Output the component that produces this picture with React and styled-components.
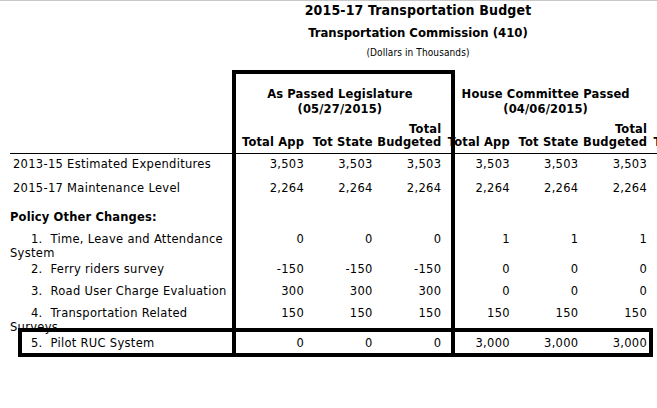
import React from 'react';
import styled, { createGlobalStyle } from 'styled-components';

const COLS = '227px repeat(9, 68.6px)';

const Global = createGlobalStyle`
  html, body { margin: 0; padding: 0; overflow: hidden; background: #fff; }
  body { font-family: "DejaVu Sans", Verdana, sans-serif; color: #000; }
`;

const Page = styled.div`
  width: 657px;
  height: 408px;
  overflow: hidden;
  border-top: 1px solid #c8c8c8;
  box-sizing: border-box;
`;

const Content = styled.div`
  padding-left: 10px;
  width: 844px;
`;

const TitleBlock = styled.header`
  width: 816px;
  text-align: center;
  font-family: "DejaVu Sans Condensed", "DejaVu Sans", Tahoma, sans-serif;
  font-stretch: condensed;
`;

const Title = styled.h1`
  margin: 0;
  font-size: 14px;
  font-weight: bold;
  line-height: 18px;
  letter-spacing: 0.15px;
`;

const Subtitle = styled.h2`
  margin: 6px 0 0;
  font-size: 13px;
  font-weight: bold;
  line-height: 16px;
`;

const Note = styled.div`
  margin-top: 5.3px;
  font-size: 10px;
  line-height: 14px;
  letter-spacing: 0.1px;
`;

const Table = styled.div`
  position: relative;
  margin-top: 9.8px;
  font-size: 11.5px;
  letter-spacing: 0.3px;
`;

const HeadGrid = styled.div`
  display: grid;
  grid-template-columns: ${COLS};
  grid-template-rows: 30px 30px;
  row-gap: 6.3px;
  padding-top: 16.7px;
  border-bottom: 1px solid #000;
  font-weight: bold;
  letter-spacing: 0.15px;
`;

const GroupHead = styled.div`
  grid-row: 1;
  grid-column: ${(p) => p.$start} / span 3;
  text-align: center;
  line-height: 15px;
`;

const ColHead = styled.div`
  grid-row: 2;
  align-self: end;
  text-align: right;
  line-height: 13px;
  padding: 0 1.5px 4px 0;
  white-space: nowrap;
`;

const Row = styled.div`
  display: grid;
  grid-template-columns: ${COLS};
  height: ${(p) => p.$h}px;
  line-height: 14px;
`;

const Label = styled.div`
  padding-top: 3px;
  padding-left: ${(p) => (p.$pad ? 3 : 0)}px;
  text-indent: ${(p) => (p.$item ? 21 : 0)}px;
  font-weight: ${(p) => (p.$heading ? 'bold' : 'normal')};
  letter-spacing: ${(p) => (p.$heading ? 0.15 : 0.3)}px;
  white-space: pre-wrap;
`;

const Num = styled.div`
  padding: 3px 1.5px 0 0;
  text-align: right;
`;

const Frame = styled.div`
  position: absolute;
  box-sizing: border-box;
  border: 4px solid #000;
  pointer-events: none;
`;

const LegFrame = styled(Frame)`
  left: 222px;
  top: 0;
  width: 223px;
  height: 287px;
`;

const RowFrame = styled(Frame)`
  left: 8px;
  top: 258px;
  width: 635px;
  height: 29px;
`;

const groups = [
  { start: 2, title: ['As Passed Legislature', '(05/27/2015)'] },
  { start: 5, title: ['House Committee Passed', '(04/06/2015)'] },
  { start: 8, title: ['', ''] },
];

const rows = [
  { label: '2013-15 Estimated Expenditures', h: 24, pad: true, a: '3,503', b: '3,503' },
  { label: '2015-17 Maintenance Level', h: 29, pad: true, a: '2,264', b: '2,264' },
  { label: 'Policy Other Changes:', h: 22, heading: true },
  { label: '1.  Time, Leave and Attendance System', h: 30, item: true, a: '0', b: '1' },
  { label: '2.  Ferry riders survey', h: 22, item: true, a: '-150', b: '0' },
  { label: '3.  Road User Charge Evaluation', h: 22, item: true, a: '300', b: '0' },
  { label: '4.  Transportation Related Surveys', h: 30, item: true, a: '150', b: '150' },
  { label: '5.  Pilot RUC System', h: 22, item: true, a: '0', b: '3,000' },
];

export default function App() {
  return (
    <>
      <Global />
      <Page>
        <Content>
          <TitleBlock>
            <Title>2015-17 Transportation Budget</Title>
            <Subtitle>Transportation Commission (410)</Subtitle>
            <Note>(Dollars in Thousands)</Note>
          </TitleBlock>
          <Table>
            <HeadGrid>
              {groups.map((g) => (
                <GroupHead key={g.start} $start={g.start}>
                  {g.title[0]}
                  <br />
                  {g.title[1]}
                </GroupHead>
              ))}
              <div style={{ gridRow: 2, gridColumn: 1 }} />
              {groups.map((g) => (
                <React.Fragment key={g.start}>
                  <ColHead>Total App</ColHead>
                  <ColHead>Tot State</ColHead>
                  <ColHead>
                    Total
                    <br />
                    Budgeted
                  </ColHead>
                </React.Fragment>
              ))}
            </HeadGrid>
            {rows.map((r, i) => (
              <Row key={i} $h={r.h}>
                <Label $pad={r.pad} $item={r.item} $heading={r.heading}>
                  {r.label}
                </Label>
                {r.a !== undefined && (
                  <>
                    <Num>{r.a}</Num>
                    <Num>{r.a}</Num>
                    <Num>{r.a}</Num>
                    <Num>{r.b}</Num>
                    <Num>{r.b}</Num>
                    <Num>{r.b}</Num>
                  </>
                )}
              </Row>
            ))}
            <LegFrame />
            <RowFrame />
          </Table>
        </Content>
      </Page>
    </>
  );
}
